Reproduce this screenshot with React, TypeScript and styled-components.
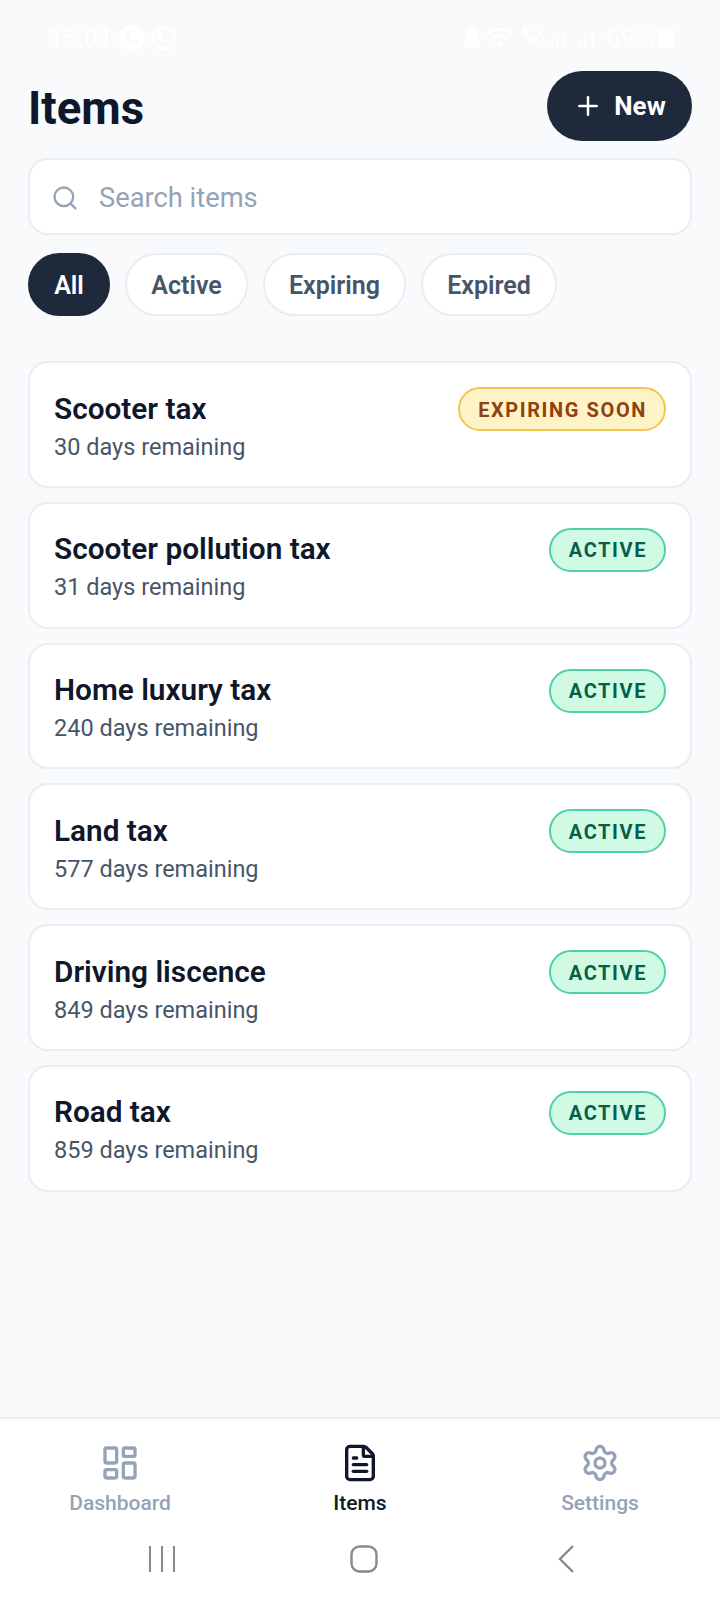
import React from "react";
import styled, { createGlobalStyle } from "styled-components";
import { Plus, Search, LayoutDashboard, FileText, Settings } from "lucide-react";

const Global = createGlobalStyle`
  html, body { margin: 0; padding: 0; background: #f8fafc; }
  * { box-sizing: border-box; }
`;

const Page = styled.div`
  width: 720px;
  height: 1600px;
  display: flex;
  flex-direction: column;
  background: #f8fafc;
  font-family: Roboto, "Liberation Sans", sans-serif;
  overflow: hidden;
`;

const StatusBar = styled.div`
  height: 70px;
  flex: none;
  padding: 24px 46px 0 48px;
  display: flex;
  justify-content: space-between;
  align-items: flex-start;
  color: #ffffff;
  font-size: 26px;
  line-height: 28px;
`;

const StatusGroup = styled.div`
  display: flex;
  align-items: center;
  gap: 6px;
  height: 28px;
`;

const Main = styled.main`
  flex: 1;
  padding: 0 28px;
  display: flex;
  flex-direction: column;
`;

const Header = styled.header`
  display: flex;
  justify-content: space-between;
  align-items: center;
  height: 70px;
`;

const Title = styled.h1`
  margin: 6px 0 0;
  font-size: 45.5px;
  font-weight: 700;
  letter-spacing: 0;
  color: #0f172a;
`;

const NewButton = styled.button`
  width: 145px;
  height: 70px;
  margin-top: 1px;
  border: none;
  border-radius: 35px;
  background: #1e293b;
  color: #ffffff;
  font: 700 26px Roboto, sans-serif;
  display: flex;
  align-items: center;
  justify-content: center;
  gap: 11px;
  padding: 0;
`;

const SearchBox = styled.div`
  margin-top: 18px;
  height: 77px;
  border: 2px solid #e9eef4;
  border-radius: 20px;
  background: #ffffff;
  display: flex;
  align-items: center;
  padding: 2px 21px 0;
  gap: 20px;
  color: #94a3b8;
  font-size: 27.3px;
`;

const Chips = styled.div`
  margin-top: 18px;
  display: flex;
  gap: 15px;
`;

const Chip = styled.div<{ $active?: boolean; $w: number }>`
  width: ${(p) => p.$w}px;
  height: 63px;
  border-radius: 32px;
  padding-top: 1px;
  display: flex;
  align-items: center;
  justify-content: center;
  font-size: 25px;
  font-weight: 600;
  color: ${(p) => (p.$active ? "#ffffff" : "#475569")};
  background: ${(p) => (p.$active ? "#1e293b" : "#ffffff")};
  border: 2px solid ${(p) => (p.$active ? "#1e293b" : "#e9eef4")};
`;

const List = styled.div`
  margin-top: 45px;
  display: flex;
  flex-direction: column;
  gap: 14px;
`;

const Card = styled.div`
  height: 126.8px;
  background: #ffffff;
  border: 2px solid #e9eef4;
  border-radius: 20px;
  padding: 24px 24px 0 24px;
  display: flex;
  justify-content: space-between;
  align-items: flex-start;
`;

const CardText = styled.div`
  margin-top: 1.5px;
  display: flex;
  flex-direction: column;
`;

const CardTitle = styled.div`
  font-size: 29.75px;
  line-height: 40px;
  font-weight: 600;
  color: #0f172a;
`;

const CardSub = styled.div`
  font-size: 23.5px;
  line-height: 36px;
  color: #475569;
`;

const Badge = styled.div<{ $kind: "active" | "soon" }>`
  height: 44px;
  padding: 1px 17px 0 18px;
  border-radius: 22px;
  display: flex;
  align-items: center;
  font-size: 20px;
  font-weight: 700;
  letter-spacing: 1.6px;
  color: ${(p) => (p.$kind === "soon" ? "#92400e" : "#065f46")};
  background: ${(p) => (p.$kind === "soon" ? "#fef3c7" : "#d1fae5")};
  border: 2px solid ${(p) => (p.$kind === "soon" ? "#f0c64c" : "#4fd1a5")};
`;

const BottomNav = styled.nav`
  flex: none;
  height: 110px;
  margin-top: -1px;
  background: #ffffff;
  border-top: 2px solid #e9eef4;
  display: grid;
  grid-template-columns: 240px 240px 240px;
  padding-top: 24px;
`;

const NavItem = styled.div<{ $active?: boolean }>`
  display: flex;
  flex-direction: column;
  align-items: center;
  gap: 8px;
  font-size: 21px;
  font-weight: 500;
  color: ${(p) => (p.$active ? "#0f172a" : "#94a3b8")};
`;

const SystemBar = styled.div`
  flex: none;
  height: 73px;
  background: #ffffff;
  display: flex;
  padding: 17px 0 0 61px;
`;

const SystemSlot = styled.div`
  width: 202px;
  height: 30px;
  display: flex;
  justify-content: center;
  align-items: center;
`;

const StatusIcon = styled.svg<{ $ml?: number }>`
  display: block;
  fill: #ffffff;
  flex: none;
  margin-left: ${(p) => p.$ml ?? 0}px;
`;

const Percent = styled.span`
  margin-left: 4px;
`;

const items = [
  ["Scooter tax", "30 days remaining", "soon"],
  ["Scooter pollution tax", "31 days remaining", "active"],
  ["Home luxury tax", "240 days remaining", "active"],
  ["Land tax", "577 days remaining", "active"],
  ["Driving liscence", "849 days remaining", "active"],
  ["Road tax", "859 days remaining", "active"],
] as const;

const PHONE = "M8 6c1-1 2-1 2.6 0l1.2 2.4c.3.7.1 1.3-.4 1.8l-.9.9c.7 1.5 1.9 2.8 3.4 3.5l.9-.9c.5-.5 1.1-.7 1.8-.4l2.3 1.2c1 .6 1 1.6 0 2.6-1.4 1.4-3.2 1.4-5.4.3-3-1.5-5.4-3.9-6.6-6.9-.8-2-.6-3.5.9-4.5z";

export default function App() {
  return (
    <Page>
      <Global />
      <StatusBar>
        <StatusGroup>
          <span>15:01</span>
          <StatusIcon width="26" height="26" viewBox="0 0 26 26">
            <path fillRule="evenodd" d={`M13 0a13 13 0 1 1 0 26a13 13 0 1 1 0-26z ${PHONE}`} />
          </StatusIcon>
          <StatusIcon width="26" height="26" viewBox="0 0 26 26">
            <path fillRule="evenodd" d={`M13 1a12 12 0 0 1 0 24a12 12 0 0 1-6-1.6L1.5 25l1.6-5.4A12 12 0 0 1 13 1zm0 2.5a9.5 9.5 0 0 0-8 14.6l-.9 3.6 3.6-1A9.5 9.5 0 1 0 13 3.500z ${PHONE}`} />
          </StatusIcon>
        </StatusGroup>
        <StatusGroup>
          <StatusIcon width="16" height="24" viewBox="0 0 16 24">
            <path d="M8 0c1 0 1.500.6 1.500 1.500C13 2.500 15 5 15 9v8l1 2v2H0v-2l1-2V9c0-4 2-6.500 5.500-7.500C6.500.6 7 0 8 0z" />
          </StatusIcon>
          <StatusIcon width="26" height="20" viewBox="0 0 26 20">
            <path d="M13 0c5 0 9.500 2 13 5.500L24 7.500C21 4.500 17.200 3 13 3S5 4.500 2 7.500L0 5.500C3.500 2 8 0 13 0zm0 6.500c3.300 0 6.300 1.300 8.600 3.600l-2 2C18 10.400 15.600 9.500 13 9.500s-5 .9-6.600 2.600l-2-2C6.700 7.800 9.700 6.500 13 6.500zM13 13c1.600 0 3 .6 4.100 1.700L13 19l-4.100-4.300C10 13.600 11.400 13 13 13z" />
          </StatusIcon>
          <StatusIcon width="26" height="26" viewBox="0 0 26 26">
            <path d="M6 2c1-1 2.500-1 3.200.3l1.500 3c.4.8.2 1.600-.5 2.200L9 8.600c.9 1.900 2.400 3.500 4.300 4.400l1.100-1.200c.6-.7 1.400-.9 2.200-.5l2.900 1.500c1.300.7 1.300 2.200.3 3.200-1.800 1.800-4 1.800-6.800.4-3.700-1.900-6.700-4.900-8.200-8.600C3 5 3.500 3.400 6 2zM14 1c5 0 9 4 9 9h-2c0-4-3-7-7-7z" />
          </StatusIcon>
          <StatusIcon width="18" height="20" viewBox="0 0 18 20">
            <path d="M0 15h3v4H0zM6 11h3v8H6zM13 4h3v15h-3z" />
          </StatusIcon>
          <StatusIcon width="18" height="20" viewBox="0 0 18 20" $ml={4}>
            <path d="M0 15h3v4H0zM6 11h3v8H6zM13 4h3v15h-3z" />
          </StatusIcon>
          <Percent>69%</Percent>
          <StatusIcon width="16" height="20" viewBox="0 0 16 20" $ml={-2}>
            <path d="M5 0h6v2h3c1 0 2 1 2 2v14c0 1-1 2-2 2H2c-1 0-2-1-2-2V4c0-1 1-2 2-2h3z" />
          </StatusIcon>
        </StatusGroup>
      </StatusBar>
      <Main>
        <Header>
          <Title>Items</Title>
          <NewButton>
            <Plus size={30} strokeWidth={2} />
            New
          </NewButton>
        </Header>
        <SearchBox>
          <Search size={28} strokeWidth={2} />
          Search items
        </SearchBox>
        <Chips>
          <Chip $active $w={82}>All</Chip>
          <Chip $w={123}>Active</Chip>
          <Chip $w={143}>Expiring</Chip>
          <Chip $w={136}>Expired</Chip>
        </Chips>
        <List>
          {items.map(([t, s, k]) => (
            <Card key={t}>
              <CardText>
                <CardTitle>{t}</CardTitle>
                <CardSub>{s}</CardSub>
              </CardText>
              <Badge $kind={k}>{k === "soon" ? "EXPIRING SOON" : "ACTIVE"}</Badge>
            </Card>
          ))}
        </List>
      </Main>
      <BottomNav>
        <NavItem><LayoutDashboard size={40} strokeWidth={2} />Dashboard</NavItem>
        <NavItem $active><FileText size={40} strokeWidth={2} />Items</NavItem>
        <NavItem><Settings size={40} strokeWidth={2} />Settings</NavItem>
      </BottomNav>
      <SystemBar>
        <SystemSlot>
          <svg width="28" height="28" viewBox="0 0 28 28" fill="none" stroke="#8a8a8a" strokeWidth="2">
            <path d="M2 1v26M14 1v26M26 1v26" />
          </svg>
        </SystemSlot>
        <SystemSlot>
          <svg width="28" height="28" viewBox="0 0 28 28" fill="none" stroke="#8a8a8a" strokeWidth="2.4">
            <rect x="1.500" y="1.500" width="25" height="25" rx="8" />
          </svg>
        </SystemSlot>
        <SystemSlot>
          <svg width="16" height="28" viewBox="0 0 16 28" fill="none" stroke="#8a8a8a" strokeWidth="2.4">
            <path d="M15 1L2 14l13 13" />
          </svg>
        </SystemSlot>
      </SystemBar>
    </Page>
  );
}
